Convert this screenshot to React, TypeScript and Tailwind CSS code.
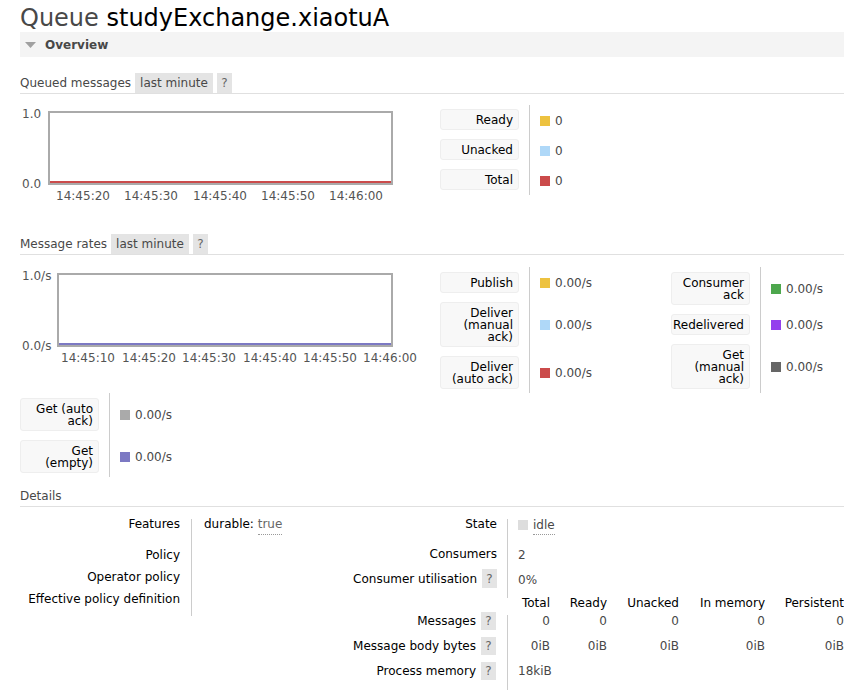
import React from 'react';

type LegendItem = { label: React.ReactNode; swatch: string; value: string };

const queuedLegend: LegendItem[] = [
  { label: 'Ready', swatch: 'bg-[#edc240]', value: '0' },
  { label: 'Unacked', swatch: 'bg-[#afd8f8]', value: '0' },
  { label: 'Total', swatch: 'bg-[#cb4b4b]', value: '0' },
];

const ratesLeft: LegendItem[] = [
  { label: 'Publish', swatch: 'bg-[#edc240]', value: '0.00/s' },
  { label: <>Deliver<br />(manual<br />ack)</>, swatch: 'bg-[#afd8f8]', value: '0.00/s' },
  { label: <>Deliver<br />(auto ack)</>, swatch: 'bg-[#cb4b4b]', value: '0.00/s' },
];

const ratesRight: LegendItem[] = [
  { label: <>Consumer<br />ack</>, swatch: 'bg-[#4da74d]', value: '0.00/s' },
  { label: 'Redelivered', swatch: 'bg-[#9440ed]', value: '0.00/s' },
  { label: <>Get<br />(manual<br />ack)</>, swatch: 'bg-[#666666]', value: '0.00/s' },
];

const ratesGet: LegendItem[] = [
  { label: <>Get (auto<br />ack)</>, swatch: 'bg-[#aaaaaa]', value: '0.00/s' },
  { label: <>Get<br />(empty)</>, swatch: 'bg-[#7c79c3]', value: '0.00/s' },
];

function Help({ className = '' }: { className?: string }) {
  return (
    <span className={`inline-flex w-[15px] items-center justify-center bg-[#e4e4e4] text-[#666] ${className}`}>
      ?
    </span>
  );
}

function SectionHeader({ title, range }: { title: string; range?: boolean }) {
  return (
    <div className="flex h-[21px] items-center border-b border-[#e0e0e0] pb-px">
      <span>{title}</span>
      {range && (
        <>
          <span className="ml-1 flex h-[20px] items-center bg-[#e4e4e4] px-[5px]">last minute</span>
          <Help className="ml-1 h-[20px] w-[14px]" />
        </>
      )}
    </div>
  );
}

function Legend({ items, top = 4 }: { items: LegendItem[]; top?: number }) {
  const cellPad = top === 4 ? 'pt-[4px] pb-[5px]' : 'pt-[5px] pb-[4px]';
  return (
    <div className="grid grid-cols-[90px_auto] content-start self-start">
      {items.map((item, i) => (
        <React.Fragment key={i}>
          <div className={`border-r border-[#ccc] pr-[10px] ${cellPad}`}>
            <div className="rounded-[3px] border border-[#eee] bg-[#f8f8f8] pb-[3px] pr-[5px] pt-[4px] text-right leading-[12px] text-black">
              {item.label}
            </div>
          </div>
          <div className="flex items-center pl-[10px] pt-px">
            <span className={`mr-[5px] h-[10px] w-[10px] ${item.swatch}`} />
            <span>{item.value}</span>
          </div>
        </React.Fragment>
      ))}
    </div>
  );
}

function QueuedChart() {
  const ticks = [
    { t: '14:45:20', x: 'left-[63px]' },
    { t: '14:45:30', x: 'left-[131px]' },
    { t: '14:45:40', x: 'left-[200px]' },
    { t: '14:45:50', x: 'left-[268px]' },
    { t: '14:46:00', x: 'left-[336px]' },
  ];
  return (
    <div className="relative h-[110px] w-[420px] shrink-0 text-[#545454]">
      <div className="absolute left-[28px] top-[6px] h-[74px] w-[345px] border-2 border-[#aaa]">
        <div className="absolute bottom-0 left-0 right-0 h-[2px] bg-[#cb4b4b]" />
      </div>
      <span className="absolute left-[2px] top-[2px] leading-[14px]">1.0</span>
      <span className="absolute left-[2px] top-[72px] leading-[14px]">0.0</span>
      {ticks.map((k) => (
        <span key={k.t} className={`absolute top-[84px] -translate-x-1/2 leading-[14px] ${k.x}`}>
          {k.t}
        </span>
      ))}
    </div>
  );
}

function RatesChart() {
  const ticks = [
    { t: '14:45:10', x: 'left-[68px]' },
    { t: '14:45:20', x: 'left-[129px]' },
    { t: '14:45:30', x: 'left-[189px]' },
    { t: '14:45:40', x: 'left-[250px]' },
    { t: '14:45:50', x: 'left-[310px]' },
    { t: '14:46:00', x: 'left-[370px]' },
  ];
  return (
    <div className="relative h-[126px] w-[420px] shrink-0 text-[#545454]">
      <div className="absolute left-[37px] top-[6px] h-[74px] w-[336px] border-2 border-[#aaa]">
        <div className="absolute bottom-0 left-0 right-0 h-[2px] bg-[#7c79c3]" />
      </div>
      <span className="absolute left-[2px] top-[2px] leading-[14px]">1.0/s</span>
      <span className="absolute left-[2px] top-[72px] leading-[14px]">0.0/s</span>
      {ticks.map((k) => (
        <span key={k.t} className={`absolute top-[84px] -translate-x-1/2 leading-[14px] ${k.x}`}>
          {k.t}
        </span>
      ))}
    </div>
  );
}

function Dotted({ children }: { children: React.ReactNode }) {
  return <span className="border-b border-dotted border-[#999] pb-[3px] text-[#666]">{children}</span>;
}

const cols = ['w-[42px]', 'w-[57px]', 'w-[72px]', 'w-[86px]', 'w-[79px]'];

function NumRow({ values }: { values: string[] }) {
  return (
    <div className="flex h-[18px] items-center">
      {values.map((v, i) => (
        <span key={i} className={`shrink-0 text-right ${cols[i]}`}>
          {v}
        </span>
      ))}
    </div>
  );
}

function Details() {
  return (
    <div className="mt-[10px] flex leading-[14px]">
      {/* left facts */}
      <div className="flex w-[320px] shrink-0">
        <div className="w-[171px] shrink-0 pr-[11px] text-right text-black">
          <div className="h-[31px]">Features</div>
          <div className="h-[22px]">Policy</div>
          <div className="h-[22px]">Operator policy</div>
          <div className="h-[22px]">Effective policy definition</div>
        </div>
        <div className="mt-[2px] h-[97px] w-px bg-[#ccc]" />
        <div className="pl-[12px]">
          <span className="text-black">durable: </span>
          <Dotted>true</Dotted>
        </div>
      </div>

      {/* right facts */}
      <div className="flex w-[504px] shrink-0 flex-col">
        <div className="flex">
          <div className="w-[167px] shrink-0 pr-[10px] text-right text-black">
            <div className="h-[30px]">State</div>
            <div className="h-[22px]">Consumers</div>
            <div className="flex h-[29px] items-start justify-end">
              <span className="flex h-[19px] items-center">Consumer utilisation</span>
              <Help className="ml-[5px] h-[19px] w-[14px]" />
            </div>
          </div>
          <div className="mt-[2px] h-[79px] w-px bg-[#ccc]" />
          <div className="pl-[10px]">
            <div className="flex h-[30px] items-start pt-[3px]">
              <span className="mr-[5px] h-[10px] w-[10px] bg-[#ddd]" />
              <span className="-mt-[2px] border-b border-dotted border-[#999] pb-[2px] leading-[14px]">idle</span>
            </div>
            <div className="h-[22px] pt-px">2</div>
            <div className="h-[29px] pt-[4px]">0%</div>
          </div>
        </div>

        <div className="ml-[168px] flex h-[14px] leading-[10px] text-black">
          {['Total', 'Ready', 'Unacked', 'In memory', 'Persistent'].map((h, i) => (
            <span key={h} className={`shrink-0 text-right ${cols[i]}`}>
              {h}
            </span>
          ))}
        </div>

        <div className="flex">
          <div className="w-[167px] shrink-0 pr-[11px] text-black">
            {['Messages', 'Message body bytes', 'Process memory'].map((l, i) => (
              <div key={l} className={`flex items-start justify-end ${i === 2 ? 'h-[28px]' : 'h-[25px]'}`}>
                <span className="flex h-[18px] items-center">{l}</span>
                <Help className="ml-[5px] h-[18px]" />
              </div>
            ))}
          </div>
          <div className="mt-[3px] h-[75px] w-px bg-[#ccc]" />
          <div>
            <div className="h-[25px]">
              <NumRow values={['0', '0', '0', '0', '0']} />
            </div>
            <div className="h-[25px]">
              <NumRow values={['0iB', '0iB', '0iB', '0iB', '0iB']} />
            </div>
            <div className="flex h-[18px] items-center pl-[10px]">18kiB</div>
          </div>
        </div>
      </div>
    </div>
  );
}

export default function App() {
  return (
    <div className="h-[693px] w-[844px] overflow-hidden bg-white pl-5 font-['DejaVu_Sans',sans-serif] text-[12px] text-[#484848]">
      <h1 className="h-8 whitespace-nowrap text-[24px] font-normal leading-[37px] text-[#484848]">
        Queue <span className="text-black">studyExchange.xiaotuA</span>
      </h1>

      <div className="flex h-[25px] items-center bg-[#f4f4f4] pl-[5px]">
        <svg width="11" height="6" viewBox="0 0 11 6" className="mr-[9px]">
          <polygon points="0,0 11,0 5.5,6" fill="#a0a0a0" />
        </svg>
        <span className="font-bold text-[#484848]">Overview</span>
      </div>

      <div className="mt-[16px]">
        <SectionHeader title="Queued messages" range />
        <div className="mt-[11px] flex">
          <QueuedChart />
          <Legend items={queuedLegend} />
        </div>
      </div>

      <div className="mt-[19px]">
        <SectionHeader title="Message rates" range />
        <div className="mt-[12px] flex">
          <RatesChart />
          <div className="w-[231px] shrink-0">
            <Legend items={ratesLeft} top={5} />
          </div>
          <Legend items={ratesRight} top={5} />
        </div>
        <Legend items={ratesGet} top={5} />
      </div>

      <div className="mt-[9px]">
        <SectionHeader title="Details" />
        <Details />
      </div>
    </div>
  );
}
